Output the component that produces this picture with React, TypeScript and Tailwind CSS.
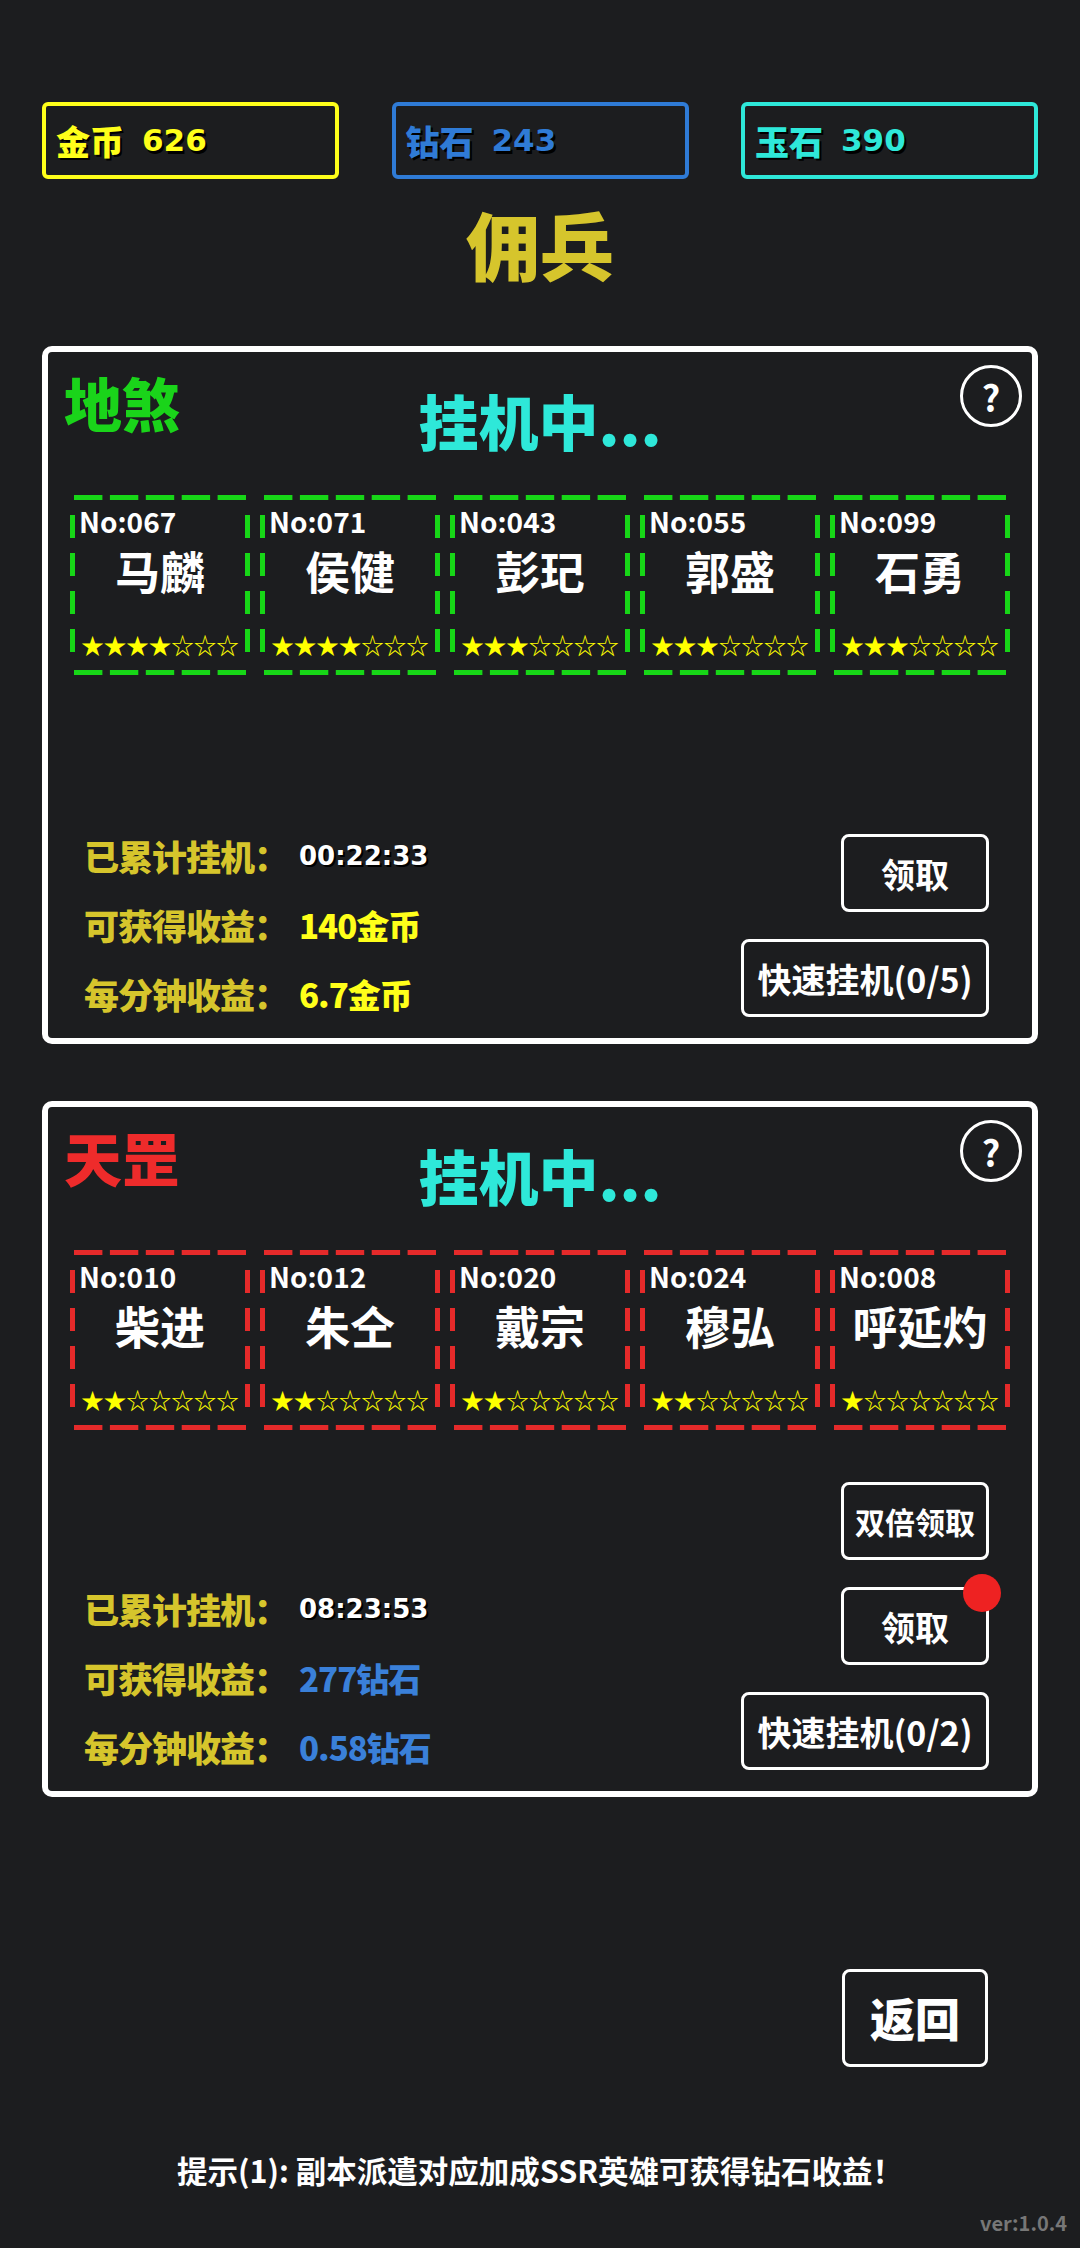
import React from "react";

type Hero = { no: string; name: string; stars: number };

const team1: Hero[] = [
  { no: "067", name: "马麟", stars: 4 },
  { no: "071", name: "侯健", stars: 4 },
  { no: "043", name: "彭玘", stars: 3 },
  { no: "055", name: "郭盛", stars: 3 },
  { no: "099", name: "石勇", stars: 3 },
];

const team2: Hero[] = [
  { no: "010", name: "柴进", stars: 2 },
  { no: "012", name: "朱仝", stars: 2 },
  { no: "020", name: "戴宗", stars: 2 },
  { no: "024", name: "穆弘", stars: 2 },
  { no: "008", name: "呼延灼", stars: 1 },
];

function DashedFrame({ color }: { color: string }) {
  return (
    <svg className="absolute inset-0 h-full w-full" viewBox="0 0 180 180">
      <line x1="4" y1="2.5" x2="176" y2="2.5" stroke={color} strokeWidth="5" strokeDasharray="28.4 7.5" />
      <line x1="4" y1="177.5" x2="176" y2="177.5" stroke={color} strokeWidth="5" strokeDasharray="28.4 7.5" />
      <line x1="2.5" y1="20" x2="2.5" y2="158" stroke={color} strokeWidth="5" strokeDasharray="23 15" />
      <line x1="177.5" y1="20" x2="177.5" y2="158" stroke={color} strokeWidth="5" strokeDasharray="23 15" />
    </svg>
  );
}

function HeroCard({ hero, color }: { hero: Hero; color: string }) {
  return (
    <div className="relative flex h-[180px] w-[180px] flex-col">
      <DashedFrame color={color} />
      <div className="pl-[9px] pt-[12px] text-[28px] font-bold leading-none text-white">No:{hero.no}</div>
      <div className="mt-[13px] text-center text-[45px] font-bold leading-none text-white">{hero.name}</div>
      <div className="mt-[40px] text-center text-[22.5px] leading-none text-[#ffff00]">
        {"★".repeat(hero.stars)}
        {"☆".repeat(7 - hero.stars)}
      </div>
    </div>
  );
}

function Button({ label, className = "", children }: { label: string; className?: string; children?: React.ReactNode }) {
  return (
    <div
      className={`relative flex h-[78px] items-center justify-center rounded-[8px] border-[3px] border-white font-bold text-white ${className}`}
    >
      {label}
      {children}
    </div>
  );
}

function InfoRow({ label, value }: { label: string; value: React.ReactNode }) {
  return (
    <div className="flex h-[69px] items-center">
      <span className="w-[215px] text-[35px] font-black tracking-[-1px] text-[#d6c52c]">{label}</span>
      {value}
    </div>
  );
}

function Panel({
  name,
  nameColor,
  dashColor,
  heroes,
  rows,
  buttons,
  height,
  rowsOffset,
}: {
  name: string;
  nameColor: string;
  dashColor: string;
  heroes: Hero[];
  rows: React.ReactNode;
  buttons: React.ReactNode;
  height: string;
  rowsOffset: string;
}) {
  return (
    <div className={`mx-[42px] flex flex-col rounded-[10px] border-[6px] border-white ${height}`}>
      <div className="grid h-[143px] grid-cols-[1fr_auto_1fr] items-start">
        <div className={`pl-[16px] pt-[21px] text-[58px] font-black leading-none ${nameColor}`}>{name}</div>
        <div className="pt-[38px] text-[60px] font-black leading-none text-[#2ee8d9]">挂机中...</div>
        <div className="flex justify-end pr-[10px] pt-[13px]">
          <div className="flex h-[62px] w-[62px] items-center justify-center rounded-full border-[3px] border-white text-[36px] font-bold leading-none text-white">
            ?
          </div>
        </div>
      </div>
      <div className="flex gap-[10px] px-[22px]">
        {heroes.map((h) => (
          <HeroCard key={h.no} hero={h} color={dashColor} />
        ))}
      </div>
      <div className="mt-auto flex items-end justify-between pb-[21px] pl-[36px] pr-[43px]">
        <div className={`flex flex-col ${rowsOffset}`}>{rows}</div>
        <div className="flex flex-col items-end gap-[27px]">{buttons}</div>
      </div>
    </div>
  );
}

const timeCls = "font-['DejaVu_Sans',sans-serif] text-[26px] font-bold text-white [text-shadow:2px_2px_0_#000]";
const valueCls = "text-[33px] font-black tracking-[-1px]";

export default function App() {
  return (
    <div className="relative flex min-h-[2248px] w-[1080px] flex-col bg-[#1c1d1f] font-['Noto_Sans_CJK_SC',sans-serif]">
      <div className="flex justify-between px-[42px] pt-[102px]">
        {[
          { label: "金币", value: "626", cls: "border-[#ffff1a] text-[#ffff1a]" },
          { label: "钻石", value: "243", cls: "border-[#2f7bd6] text-[#2f7bd6]" },
          { label: "玉石", value: "390", cls: "border-[#2ee8d9] text-[#2ee8d9]" },
        ].map((c) => (
          <div
            key={c.label}
            className={`flex h-[77px] w-[297px] items-center gap-[18px] rounded-[6px] border-[4px] pl-[10px] ${c.cls}`}
          >
            <span className="text-[34px] font-black leading-none [text-shadow:2px_2px_0_#000]">{c.label}</span>
            <span className="font-['DejaVu_Sans',sans-serif] text-[31px] font-bold leading-none [text-shadow:2px_3px_0_#000]">
              {c.value}
            </span>
          </div>
        ))}
      </div>

      <div className="mt-[27px] text-center text-[74px] font-black leading-none text-[#d6c52c]">佣兵</div>

      <div className="mt-[66px]">
        <Panel
          name="地煞"
          nameColor="text-[#1ad41a]"
          dashColor="#17d617"
          heroes={team1}
          height="h-[698px]"
          rowsOffset="mb-[-12px]"
          rows={
            <>
              <InfoRow label="已累计挂机：" value={<span className={timeCls}>00:22:33</span>} />
              <InfoRow label="可获得收益：" value={<span className={`${valueCls} text-[#ffff1a]`}>140金币</span>} />
              <InfoRow label="每分钟收益：" value={<span className={`${valueCls} text-[#ffff1a]`}>6.7金币</span>} />
            </>
          }
          buttons={
            <>
              <Button label="领取" className="w-[148px] text-[34px]" />
              <Button label="快速挂机(0/5)" className="w-[248px] text-[34px]" />
            </>
          }
        />
      </div>

      <div className="mt-[57px]">
        <Panel
          name="天罡"
          nameColor="text-[#ee2b2b]"
          dashColor="#e52a2a"
          heroes={team2}
          height="h-[696px]"
          rowsOffset="mb-[-12px]"
          rows={
            <>
              <InfoRow label="已累计挂机：" value={<span className={timeCls}>08:23:53</span>} />
              <InfoRow label="可获得收益：" value={<span className={`${valueCls} text-[#3a80d9]`}>277钻石</span>} />
              <InfoRow label="每分钟收益：" value={<span className={`${valueCls} text-[#3a80d9]`}>0.58钻石</span>} />
            </>
          }
          buttons={
            <>
              <Button label="双倍领取" className="w-[148px] text-[30px]" />
              <Button label="领取" className="w-[148px] text-[34px]">
                <span className="absolute -right-[15px] -top-[16px] h-[38px] w-[38px] rounded-full bg-[#ee2222]" />
              </Button>
              <Button label="快速挂机(0/2)" className="w-[248px] text-[34px]" />
            </>
          }
        />
      </div>

      <div className="mr-[92px] mt-[172px] flex h-[98px] w-[146px] items-center justify-center self-end rounded-[8px] border-[3px] border-white text-[45px] font-black text-white">
        返回
      </div>

      <div className="mt-[88px] text-center text-[30.5px] font-bold leading-none text-white">
        提示(1): 副本派遣对应加成SSR英雄可获得钻石收益！
      </div>

      <div className="mt-[27px] pr-[13px] text-right text-[20px] font-bold leading-none text-[#777]">ver:1.0.4</div>
    </div>
  );
}
